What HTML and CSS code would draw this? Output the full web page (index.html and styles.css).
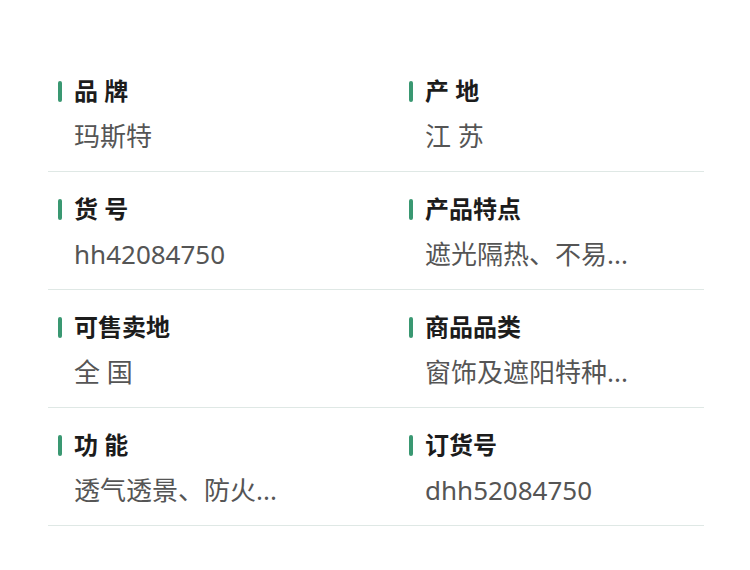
FILE: index.html
```html
<!DOCTYPE html>
<html lang="zh-CN">
<head>
<meta charset="utf-8">
<link rel="stylesheet" href="styles.css">
</head>
<body>
<div class="specs">
  <div class="row">
    <div class="cell left"><div class="label">品 牌</div><div class="value">玛斯特</div></div>
    <div class="cell right"><div class="label">产 地</div><div class="value">江 苏</div></div>
  </div>
  <div class="row">
    <div class="cell left"><div class="label">货 号</div><div class="value">hh42084750</div></div>
    <div class="cell right"><div class="label">产品特点</div><div class="value">遮光隔热、不易...</div></div>
  </div>
  <div class="row">
    <div class="cell left"><div class="label">可售卖地</div><div class="value">全 国</div></div>
    <div class="cell right"><div class="label">商品品类</div><div class="value">窗饰及遮阳特种...</div></div>
  </div>
  <div class="row">
    <div class="cell left"><div class="label">功 能</div><div class="value">透气透景、防火...</div></div>
    <div class="cell right"><div class="label">订货号</div><div class="value">dhh52084750</div></div>
  </div>
</div>
</body>
</html>
```

FILE: styles.css
```css
html, body {
  margin: 0;
  padding: 0;
  background: #ffffff;
}
body {
  font-family: "Noto Sans", "Noto Sans CJK SC", sans-serif;
}
.specs {
  width: 656px;
  margin-left: 48px;
  padding-top: 54px;
}
.row {
  display: flex;
  border-bottom: 1px solid #dfe8e5;
  padding: 23px 0 18px;
}
.cell {
  padding-left: 10px;
  box-sizing: border-box;
}
.left {
  width: 351px;
}
.right {
  flex: 1;
}
.label {
  display: flex;
  align-items: center;
  gap: 12px;
  font-size: 24px;
  line-height: 28px;
  font-weight: 700;
  color: #1c1c1c;
}
.label::before {
  content: "";
  width: 4px;
  height: 21px;
  border-radius: 2px;
  background: #3a9872;
}
.value {
  margin-top: 14px;
  padding-left: 16px;
  font-size: 26px;
  line-height: 34px;
  color: #555555;
}
```
